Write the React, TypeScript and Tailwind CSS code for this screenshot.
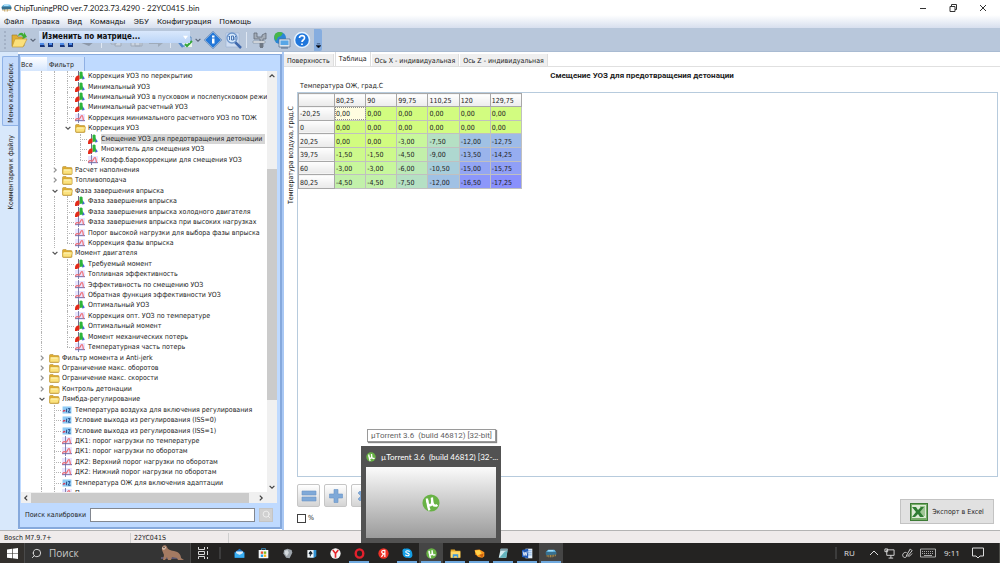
import type { ReactNode } from "react";
import { Search } from "lucide-react";

type IconKind = "surface" | "curve" | "flag" | "folder" | "open";

interface TreeRow {
  // one character per indent cell: | line, t tee, l elbow, > collapsed, v expanded
  guides: string;
  icon: IconKind;
  label: string;
}

const tree: TreeRow[] = [
  { guides: "||t", icon: "surface", label: "Коррекция УОЗ по перекрытию" },
  { guides: "||t", icon: "surface", label: "Минимальный УОЗ" },
  { guides: "||t", icon: "surface", label: "Минимальный УОЗ в пусковом и послепусковом режиме" },
  { guides: "||t", icon: "surface", label: "Минимальный расчетный УОЗ" },
  { guides: "||t", icon: "curve", label: "Коррекция минимального расчетного УОЗ по ТОЖ" },
  { guides: "||v", icon: "open", label: "Коррекция УОЗ" },
  { guides: "|| t", icon: "surface", label: "Смещение УОЗ для предотвращения детонации" },
  { guides: "|| t", icon: "surface", label: "Множитель для смещения УОЗ" },
  { guides: "|| l", icon: "curve", label: "Коэфф.барокоррекции для смещения УОЗ" },
  { guides: "|>", icon: "folder", label: "Расчет наполнения" },
  { guides: "|>", icon: "folder", label: "Топливоподача" },
  { guides: "|v", icon: "open", label: "Фаза завершения впрыска" },
  { guides: "||t", icon: "surface", label: "Фаза завершения впрыска" },
  { guides: "||t", icon: "surface", label: "Фаза завершения впрыска холодного двигателя" },
  { guides: "||t", icon: "curve", label: "Фаза завершения впрыска при высоких нагрузках" },
  { guides: "||t", icon: "curve", label: "Порог высокой нагрузки для выбора фазы впрыска" },
  { guides: "||l", icon: "curve", label: "Коррекция фазы впрыска" },
  { guides: "|v", icon: "open", label: "Момент двигателя" },
  { guides: "| t", icon: "surface", label: "Требуемый момент" },
  { guides: "| t", icon: "curve", label: "Топливная эффективность" },
  { guides: "| t", icon: "curve", label: "Эффективность по смещению УОЗ" },
  { guides: "| t", icon: "curve", label: "Обратная функция эффективности УОЗ" },
  { guides: "| t", icon: "surface", label: "Оптимальный УОЗ" },
  { guides: "| t", icon: "curve", label: "Коррекция опт. УОЗ по температуре" },
  { guides: "| t", icon: "surface", label: "Оптимальный момент" },
  { guides: "| t", icon: "surface", label: "Момент механических потерь" },
  { guides: "| l", icon: "curve", label: "Температурная часть потерь" },
  { guides: ">", icon: "folder", label: "Фильтр момента и Anti-jerk" },
  { guides: ">", icon: "folder", label: "Ограничение макс. оборотов" },
  { guides: ">", icon: "folder", label: "Ограничение макс. скорости" },
  { guides: ">", icon: "folder", label: "Контроль детонации" },
  { guides: "v", icon: "open", label: "Лямбда-регулирование" },
  { guides: "|t", icon: "flag", label: "Температура воздуха для включения регулирования" },
  { guides: "|t", icon: "flag", label: "Условие выхода из регулирования (ISS=0)" },
  { guides: "|t", icon: "flag", label: "Условие выхода из регулирования (ISS=1)" },
  { guides: "|t", icon: "curve", label: "ДК1: порог нагрузки по температуре" },
  { guides: "|t", icon: "curve", label: "ДК1: порог нагрузки по оборотам" },
  { guides: "|t", icon: "curve", label: "ДК2: Верхний порог нагрузки по оборотам" },
  { guides: "|t", icon: "curve", label: "ДК2: Нижний порог нагрузки по оборотам" },
  { guides: "|t", icon: "flag", label: "Температура ОЖ для включения адаптации" },
  { guides: "|t", icon: "curve", label: "П" },
];

const selectedRow = 6;

const columns = ["80,25", "90", "99,75", "110,25", "120", "129,75"];

const rows = [
  { head: "-20,25", cells: ["0,00", "0,00", "0,00", "0,00", "0,00", "0,00"] },
  { head: "0", cells: ["0,00", "0,00", "0,00", "0,00", "0,00", "0,00"] },
  { head: "20,25", cells: ["0,00", "0,00", "-3,00", "-7,50", "-12,00", "-12,75"] },
  { head: "39,75", cells: ["-1,50", "-1,50", "-4,50", "-9,00", "-13,50", "-14,25"] },
  { head: "60", cells: ["-3,00", "-3,00", "-6,00", "-10,50", "-15,00", "-15,75"] },
  { head: "80,25", cells: ["-4,50", "-4,50", "-7,50", "-12,00", "-16,50", "-17,25"] },
];

const heat: Record<string, string> = {
  "0,00": "bg-[#d2fc80]",
  "-1,50": "bg-[#cdf98c]",
  "-3,00": "bg-[#c8f79c]",
  "-4,50": "bg-[#c2f0aa]",
  "-6,00": "bg-[#bce9b8]",
  "-7,50": "bg-[#b5e0c4]",
  "-9,00": "bg-[#aed8d0]",
  "-10,50": "bg-[#a7cddb]",
  "-12,00": "bg-[#a0c1e4]",
  "-12,75": "bg-[#9dbbe8]",
  "-13,50": "bg-[#9ab4ec]",
  "-14,25": "bg-[#96adf0]",
  "-15,00": "bg-[#93a5f4]",
  "-15,75": "bg-[#909ff6]",
  "-16,50": "bg-[#8c97fa]",
  "-17,25": "bg-[#8990fc]",
};

function Chevron({ dir, className = "" }: { dir: "up" | "down" | "left" | "right"; className?: string }) {
  const d = {
    up: "M2 6.5 5 3.5 8 6.5",
    down: "M2 3.5 5 6.5 8 3.5",
    left: "M6.5 2 3.5 5 6.5 8",
    right: "M3.5 2 6.5 5 3.5 8",
  }[dir];
  return (
    <svg viewBox="0 0 10 10" className={`size-[8px] shrink-0 ${className}`} fill="none" stroke="currentColor" strokeWidth="1.5">
      <path d={d} />
    </svg>
  );
}

function Guide({ kind }: { kind: string }) {
  return (
    <span className="relative flex w-[13px] shrink-0 self-stretch items-center justify-center text-[#505050]">
      {(kind === "|" || kind === "t") && <span className="absolute inset-y-0 left-[6px] border-l border-dotted border-[#b4b4b4]" />}
      {kind === "l" && <span className="absolute top-0 h-1/2 left-[6px] border-l border-dotted border-[#b4b4b4]" />}
      {(kind === "t" || kind === "l") && <span className="absolute left-[6px] right-0 top-1/2 border-t border-dotted border-[#b4b4b4]" />}
      {kind === "v" && <Chevron dir="down" />}
      {kind === ">" && <Chevron dir="right" className="text-[#909090]" />}
    </span>
  );
}

function TreeIcon({ kind }: { kind: IconKind }) {
  if (kind === "folder" || kind === "open") {
    return (
      <svg viewBox="0 0 22 20" className="h-[10px] w-[11px]">
        <path d="M1 5q0-2 2-2h5l2 2h8q2 0 2 2v10q0 2-2 2H3q-2 0-2-2z" fill="#e0ac2e" stroke="#a8842c" />
        <path d={kind === "open" ? "M5 8h15l1 1-3 9H2L1 9z" : "M2 8h18v9q0 1-1 1H3q-1 0-1-1z"} fill="#fbe27e" stroke="#c9a03a" />
        <path d="M4 10h13" stroke="#fff6bd" strokeWidth="2" />
      </svg>
    );
  }
  if (kind === "flag") {
    return (
      <svg viewBox="0 0 20 18" className="h-[8px] w-[10px]">
        <path d="M0 1h20v16H0z" fill="#8fcbf5" />
        <path d="M1 13c2-4 3-4 5-1" stroke="#d93c55" strokeWidth="2.5" fill="none" />
        <path d="M9 6v8M12 6h5l-4 8h5" stroke="#173f80" strokeWidth="2" fill="none" />
      </svg>
    );
  }
  if (kind === "curve") {
    return (
      <svg viewBox="0 0 20 20" className="size-[10px]">
        <path d="M0 2h20v16H0z" fill="#e8e5ff" />
        <path d="M7 0v20M0 15h20" stroke="#6a6a9c" strokeWidth="1.6" />
        <path d="M0 15c3-5 5-4 7-3 3 2 4-7 7-7 2 0 2 7 3 10" fill="none" stroke="#ef6a72" strokeWidth="2.4" />
      </svg>
    );
  }
  return (
    <svg viewBox="0 0 20 20" className="size-[10px]">
      <path d="M7 0v20" stroke="#3b3b66" strokeWidth="1.5" />
      <path d="M15 8l4 6v2l-5 1z" fill="#4a60dc" />
      <path d="M9 3c1-3 5-3 6 0l1 12-7 1z" fill="#2cb53a" />
      <path d="M0 18c0-5 2-8 6-9h3v8l-5 3H0z" fill="#e32a19" />
    </svg>
  );
}

function Tree() {
  return (
    <ul className="flex h-[427px] flex-col pl-[14px]">
      {tree.map((row, i) => (
        <li key={i} className="flex min-h-0 flex-1 items-center whitespace-nowrap">
          {row.guides.split("").map((g, n) => (
            <Guide key={n} kind={g} />
          ))}
          <span className="flex w-[14px] shrink-0 pl-px">
            <TreeIcon kind={row.icon} />
          </span>
          <span className={i === selectedRow ? "bg-[#d6d6d6] pr-[3px] leading-[10px]" : "leading-[10px]"}>{row.label}</span>
        </li>
      ))}
    </ul>
  );
}

function CalibrationPanel() {
  return (
    <aside className="mt-[2px] mb-px flex w-[264px] shrink-0 flex-col border-2 border-t border-[#86a9dc] bg-[#bfdaff] p-px pr-[3px]">
      <div role="tablist" className="flex h-[15px] shrink-0 items-end">
        <button role="tab" className="h-[14px] w-[26px] bg-linear-to-b from-white to-[#d5e6fd] pt-px text-left">Все</button>
        <button role="tab" className="h-[14px] w-[38px] border-r border-[#8fb0e4] bg-[#cfe2fc] pt-px pl-[2px] text-left">Фильтр</button>
      </div>
      <div className="flex min-h-0 flex-1 bg-white">
        <div className="min-w-0 flex-1 overflow-hidden">
          <Tree />
        </div>
        <div className="flex w-[10px] shrink-0 flex-col items-center justify-between bg-[#f0f0f0] py-px text-[#404040]">
          <Chevron dir="up" />
          <span className="mt-[89px] h-[231px] w-full bg-[#cbcbcb]" />
          <span className="flex-1" />
          <Chevron dir="down" />
        </div>
      </div>
      <div className="flex h-[11px] shrink-0 items-center bg-[#f0f0f0] pr-[12px] text-[#404040]">
        <Chevron dir="left" className="mx-px" />
        <span className="mr-[8px] h-[10px] flex-1 bg-[#cbcbcb]" />
        <Chevron dir="right" />
      </div>
      <div className="flex h-[23px] shrink-0 items-center pl-[4px] pr-[4px]">
        <label htmlFor="calibration" className="w-[65px]">Поиск калибровки</label>
        <input id="calibration" className="h-[14px] min-w-0 flex-1 border border-[#828790] bg-white px-1" />
        <button aria-label="Найти" className="ml-[4px] flex size-[14px] items-center justify-center border border-[#c4c4c4] bg-[#d0d0d0] text-[#f5f5f5]">
          <Search size={9} />
        </button>
      </div>
    </aside>
  );
}

function MapTable() {
  return (
    <table className="h-[96px] w-[224px] table-fixed border-collapse text-left">
      <thead>
        <tr>
          <th className="w-[36px] border border-[#a8a8a8] bg-linear-to-b from-white to-[#e9e9e9]" />
          {columns.map((c) => (
            <th key={c} className="border border-[#a8a8a8] bg-linear-to-b from-white to-[#ececec] p-0 pt-[2px] pl-px font-normal">{c}</th>
          ))}
        </tr>
      </thead>
      <tbody>
        {rows.map((row, r) => (
          <tr key={row.head}>
            <th className="border border-[#a8a8a8] bg-linear-to-b from-white to-[#e9e9e9] p-0 pt-[2px] pl-px font-normal">{row.head}</th>
            {row.cells.map((cell, c) => (
              <td
                key={c}
                className={`border border-[#c0c0c0] p-0 pt-[2px] pl-px ${r === 0 && c === 0 ? "bg-[#fffde0] outline-1 -outline-offset-1 outline-dotted outline-[#909090]" : heat[cell]}`}
              >
                {cell}
              </td>
            ))}
          </tr>
        ))}
      </tbody>
    </table>
  );
}

function OpButton({ label, d }: { label: string; d: string }) {
  return (
    <button aria-label={label} className="flex size-[23px] items-center justify-center rounded-xs border border-[#c6c6c6] bg-linear-to-b from-white to-[#d4d4d4]">
      <svg viewBox="0 0 16 16" className="size-[16px]">
        <path d={d} fill="#7fa9d8" stroke="#6a94c6" strokeWidth=".6" />
      </svg>
    </button>
  );
}

function ExcelIcon() {
  return (
    <svg viewBox="0 0 18 18" className="size-[18px]">
      <path d="M0 0h18v18H0z" fill="#3c7b35" />
      <path d="M1 1h16v16H1z" fill="#76ad68" />
      <path d="M2 2h14v13H2z" fill="#dcebd5" />
      <path d="M10 3h5v10h-5" fill="#9fc795" />
      <path d="M2 4h4l2 3 3-3h3L10 9l4 5h-4l-2-3-3 3H2l4-5z" fill="#2f7d32" />
    </svg>
  );
}

function Workspace() {
  const tabs = ["Поверхность", "Таблица", "Ось X - индивидуальная", "Ось Z - индивидуальная"];
  return (
    <section className="flex min-w-0 flex-1 flex-col border-l-2 border-[#a9c8f4] bg-white">
      <div role="tablist" className="flex h-[15px] shrink-0 items-end gap-px border-b border-[#e0e0e0]">
        {tabs.map((t, i) => (
          <button
            key={t}
            role="tab"
            className={
              i === 1
                ? "h-[14px] border-x border-[#dedede] bg-white px-[3px] pb-px"
                : "h-[12px] border-r border-[#dedede] bg-[#efefef] px-[3px] pt-px"
            }
          >
            {t}
          </button>
        ))}
      </div>
      <h1 className="mt-[4px] text-center font-['Roboto',sans-serif] text-[8px] font-bold leading-[10px]">
        Смещение УОЗ для предотвращения детонации
      </h1>
      <div className="pl-[16px] leading-[11px]">Температура ОЖ, град.C</div>
      <div className="flex min-h-0 flex-1">
        <div className="w-[13px] shrink-0 pt-[14px] pl-[2px]">
          <span className="block rotate-180 leading-[10px] [writing-mode:vertical-rl]">Температура воздуха, град.C</span>
        </div>
        <div className="mr-[2px] min-w-0 flex-1 border border-[#b7cbdd]">
          <MapTable />
        </div>
      </div>
      <div className="flex h-[53px] shrink-0 items-start justify-between pl-[13px] pr-[6px]">
        <div className="pt-[7px]">
          <div className="flex gap-[4px]">
            <OpButton label="Присвоить" d="M1 3h14v4H1zM1 9h14v4H1z" />
            <OpButton label="Прибавить" d="M6 1.500h4v4.500h4.500v4H10v4.500H6V10H1.500V6H6z" />
            <OpButton label="Умножить" d="M3 5l2-2 3 3 3-3 2 2-3 3 3 3-2 2-3-3-3 3-2-2 3-3z" />
          </div>
          <label className="mt-[6px] flex items-center gap-[2px]">
            <input type="checkbox" className="size-[9px] appearance-none border border-[#404040] bg-white" />%
          </label>
        </div>
        <button className="mt-[22px] flex h-[25px] w-[94px] items-center justify-center gap-[4px] border border-[#c3c3c3] bg-[#e1e1e1]">
          <ExcelIcon />
          Экспорт в Excel
        </button>
      </div>
    </section>
  );
}

function ChipIcon({ className }: { className: string }) {
  return (
    <svg viewBox="0 0 22 16" className={className}>
      <path d="M4 8v6M7 9v6M10 9v6M13 9v6M16 9v5M19 8v5" stroke="#c09a4a" strokeWidth="1.5" />
      <path d="M1 6 5 2h13l3 4v4L2 11z" fill="#37708f" />
      <path d="M2 5 6 1h11l3 4z" fill="#6ac0ef" />
      <path d="M6 3h9" stroke="#c9efff" strokeWidth="1.5" />
    </svg>
  );
}

function ToolButton({ label, children }: { label: string; children?: ReactNode }) {
  return (
    <button aria-label={label} className="flex w-[20px] shrink-0 items-center justify-center">
      <svg viewBox="0 0 18 18" className="size-[18px]">
        {children}
      </svg>
    </button>
  );
}

function Binoculars() {
  return (
    <>
      <path d="M2 8h4v5l1 3H2zM10 8h5v8h-5z" fill="#16357c" />
      <path d="M6 8h4v3H6z" fill="#6b86b8" />
      <path d="M2 13h4M11 13h3" stroke="#4f8be6" strokeWidth="2" />
    </>
  );
}

function Toolbar() {
  return (
    <div className="relative flex h-[24px] shrink-0 items-center border-b border-[#a9bbd2] bg-[#b8c7db]">
      <span className="ml-[4px] h-[18px] border-l-2 border-dotted border-[#a3b1c6]" />
      <span className="w-[3px]" />
      <ToolButton label="Открыть">
        <path d="M2 4h5l1 2h6v9H2z" fill="#dfae34" stroke="#9b7a25" strokeWidth=".6" />
        <path d="M5 8h12l-4 8H2z" fill="#fbe07a" stroke="#b9912f" strokeWidth=".6" />
        <path d="M8 5c1-4 5-4 6-1V1l3 5-5 2 1-2c-1-2-3-2-5-1z" fill="#3dac33" />
      </ToolButton>
      <Chevron dir="down" className="text-[#5a6578]" />
      <ToolButton label="Поиск">
        <Binoculars />
      </ToolButton>
      <ToolButton label="Искать далее">
        <Binoculars />
      </ToolButton>
      <ToolButton label="Печать">
        <path d="M1 11 8 6l9 4-6 5z" fill="#8d98a8" />
        <path d="M5 10l4-2 5 2-4 2z" fill="#e4e8ee" />
      </ToolButton>
      <span className="mx-[4px] h-[16px] w-px bg-[#dfe7f2]" />
      <ToolButton label="Копировать">
        <path d="M4 6h5v7H4zM8 8h6v7H8z" fill="#cbd4e0" stroke="#9fabba" />
      </ToolButton>
      <ToolButton label="Вставить">
        <path d="M4 4h9v11H4zM8 8h7v7H8z" fill="#cbd4e0" stroke="#9fabba" />
      </ToolButton>
      <ToolButton label="Отменить">
        <path d="M2 10h9V7l5 5-5 4v-3H2z" fill="#9fabba" />
      </ToolButton>
      <span className="ml-[4px] h-[16px] w-px bg-[#dfe7f2]" />
      <span className="w-[3px]" />
      <ToolButton label="Проверить">
        <path d="M3 6h13v9H6z" fill="#d6e8fb" stroke="#5a8dc5" />
        <path d="M4 11l4 5" stroke="#4f86cc" strokeWidth="2.500" />
        <path d="M10 10h7v6h-7z" fill="#e8f6e8" />
        <path d="M10 13l2 2 5-5" fill="none" stroke="#35a53b" strokeWidth="2" />
      </ToolButton>
      <Chevron dir="down" className="text-[#5a6578]" />
      <span className="w-px" />
      <ToolButton label="Сведения">
        <path d="M9 1l8 8-8 8-8-8z" fill="#2478d8" stroke="#c5e4ff" strokeWidth=".8" />
        <path d="M9 .5 17.500 9 9 17.500.5 9z" fill="none" stroke="#1d559c" strokeWidth=".7" />
        <path d="M8 7.500h2.500v5H8zM8 4.500h2.500v2H8z" fill="#fff" />
      </ToolButton>
      <ToolButton label="Сравнить">
        <path d="M2 2h13v14H2z" fill="#cfddf1" stroke="#9db4d6" strokeWidth=".7" />
        <path d="M11 11l6 6" stroke="#3f68ac" strokeWidth="2.500" />
        <circle cx="8" cy="7" r="5" fill="#d5e8fb" stroke="#6d95cb" strokeWidth="1.300" />
        <path d="M4.500 6l1-1v4M7.500 5h2v4h-2zM12 5l-1 1v3" stroke="#3a69ac" strokeWidth=".9" fill="none" />
      </ToolButton>
      <span className="mx-[3px] h-[16px] w-px bg-[#dfe7f2]" />
      <ToolButton label="Настройки">
        <path d="M3 2h3v4h5V4l4-2v6h-3v8H9V8H3z" fill="#a4adb8" stroke="#59626e" strokeWidth=".7" />
        <path d="M2 10h12v2H2z" fill="#eef1f5" stroke="#6b7480" strokeWidth=".5" />
        <path d="M9 12h3v5H9z" fill="#6f7884" />
      </ToolButton>
      <span className="w-[2px]" />
      <ToolButton label="Интернет">
        <circle cx="7" cy="7" r="6" fill="#2b86d6" />
        <path d="M2 3c3-3 6-2 8-1L8 5 5 6 3 10C1 8 1 5 2 3z" fill="#48b648" />
        <path d="M6 8h11v8H6z" fill="#dfe6ee" stroke="#526c8b" strokeWidth=".7" />
        <path d="M7.500 9.500h8V14h-8z" fill="#58a6e6" />
        <path d="M8 17h7" stroke="#526c8b" />
      </ToolButton>
      <ToolButton label="Справка">
        <circle cx="9" cy="9" r="7.500" fill="#2077dc" stroke="#e4f2ff" strokeWidth="1.500" />
        <path d="M6.500 7C6.500 3.500 12 4 11.500 7c0 2-2.500 2-2.500 4M9 12.500V14" fill="none" stroke="#fff" strokeWidth="1.700" />
      </ToolButton>
      <button aria-label="Ещё" className="ml-[2px] flex h-[22px] w-[8px] items-end justify-center rounded-r-xs bg-[#86addf] pb-[3px]">
        <svg viewBox="0 0 6 6" className="size-[5px]"><path d="M1 1h4M0 3h6L3 6z" stroke="#1c2c48" strokeWidth=".8" /></svg>
      </button>
      {/* floating macro bar over the disabled icons */}
      <div className="absolute left-[39px] top-[3px] flex h-[12px] w-[151px] items-center justify-between bg-linear-to-b from-[#d9e8fc] to-[#bcd5f7] pr-[2px] pl-[3px]">
        <button className="text-[8px] font-bold leading-[12px] text-[#111]">Изменить по матрице...</button>
        <svg viewBox="0 0 6 6" className="size-[5px]"><path d="M0 1h6L3 5z" fill="#fff" /></svg>
      </div>
    </div>
  );
}

function UTorrentIcon({ className }: { className: string }) {
  return (
    <svg viewBox="0 0 20 20" className={className}>
      <circle cx="10" cy="10" r="9.500" fill="#68b245" />
      <path d="M5.500 5c0 5 1 7.500 3.500 7.500S11.500 9 11 4M11 4c.3 6 1 9 3.500 9 1 0 2-.5 2.500-1M6 7c.5 5 1 9 2.500 11" fill="none" stroke="#fff" strokeWidth="2.600" />
    </svg>
  );
}

function AppGlyph({ name }: { name: string }) {
  switch (name) {
    case "Почта":
      return <><path d="M1 6 8 1l7 5v8H1z" fill="#1b74c5" /><path d="M3 5h10v5H3z" fill="#d9ecfa" /><path d="M1 6l7 4 7-4v8H1z" fill="#38aef2" /></>;
    case "Магазин":
      return <><path d="M5 4V1h6v3" stroke="#47b5f0" fill="none" /><path d="M1 3h14v11q0 1-1 1H2q-1 0-1-1z" fill="#f4f8fb" /><path d="M4 5h3.500v3.500H4z" fill="#e9512d" /><path d="M8.500 5H12v3.500H8.500z" fill="#7db91f" /><path d="M4 9.500h3.500V13H4z" fill="#20a2e8" /><path d="M8.500 9.500H12V13H8.500z" fill="#f9b715" /></>;
    case "Танки":
      return <><path d="M8 1l6 2 1 4-4 8-5-1-4-6 1-5z" fill="#9da4ab" /><path d="M4 4l4-1 2 4-3 5-3-4z" fill="#d5dade" /></>;
    case "Пасьянс":
      return <><path d="M5 3h10v9l-3 2H6z" fill="#2f91d2" /><path d="M2 3h9v11H2z" fill="#f3f7fa" /><path d="M6.500 4c3 3 4 4 2 5.500L7 9v3H5.500V9C3 9 3.500 7 6.500 4z" fill="#182735" /></>;
    case "Яндекс.Браузер":
      return <><circle cx="8" cy="8" r="7.500" fill="#f5f5f5" /><path d="M4 3l4 5 4-5M8 8v6" fill="none" stroke="#e5262c" strokeWidth="2.400" /></>;
    case "Opera":
      return <ellipse cx="8" cy="8" rx="5.500" ry="6" fill="none" stroke="#e3202c" strokeWidth="3.500" />;
    case "Яндекс":
      return <><circle cx="8" cy="8" r="7.500" fill="#ef3127" /><path d="M10 13V3.500C6 3 5 5 5.500 6.500S8 8.500 10 8.500M8 8.500 5 13" fill="none" stroke="#fff" strokeWidth="1.700" /></>;
    case "Skype":
      return <><path d="M5 1C1 0 0 4 1 6c-1 6 4 9 8 8 4 2 7-2 6-5 0-6-5-9-10-8z" fill="#159fe5" /><path d="M11 5.500C10 3.500 5 3.500 5.500 6c.5 2 5 1 5 3.500 0 2.500-5 2-5.500 0" fill="none" stroke="#fff" strokeWidth="1.600" /></>;
    case "Проводник":
      return <><path d="M1 2h6l1 2h7v10H1z" fill="#e7a927" /><path d="M1 5h14v9H1z" fill="#ffd968" /><path d="M4 9h8v5H10v-2H6v2H4z" fill="#3e98dc" /></>;
    case "Карты":
      return <><path d="M1 3l7-1 7 4v6l-3 2-6-1-4-4z" fill="#f7941d" /><path d="M1 4l7-1 3 5-6 3z" fill="#ffd24a" /><path d="M8 10l6-2-2 6z" fill="#c85f10" /></>;
    case "Блокнот":
      return <><path d="M4 1h10l-2 13H1z" fill="#cfe9ee" /><path d="M4 1h10v3H3z" fill="#7a9aa5" /><path d="M10 5l4-1-2 10H2z" fill="#63b3bd" /></>;
    case "Word":
      return <><path d="M5 1h10v14H5z" fill="#e2edfa" /><path d="M7 4h7M7 7h7M7 10h7" stroke="#5b95da" /><path d="M0 3l9-2v14l-9-2z" fill="#2058b5" /><path d="M1.500 5l1.500 6 1.500-5 1.500 5 1.500-6" fill="none" stroke="#fff" strokeWidth="1.200" /></>;
    default:
      return null;
  }
}

const apps = [
  { name: "Почта" },
  { name: "Магазин" },
  { name: "Танки" },
  { name: "Пасьянс" },
  { name: "Яндекс.Браузер" },
  { name: "Opera", running: true },
  { name: "Яндекс" },
  { name: "Skype", running: true },
  { name: "µTorrent", running: true, active: true },
  { name: "Проводник", running: true },
  { name: "Карты", running: true },
  { name: "Блокнот", running: true },
  { name: "Word", running: true },
  { name: "ChipTuningPRO", running: true, active: true },
];

function Taskbar() {
  return (
    <footer className="relative flex h-[20px] shrink-0 items-stretch bg-[#242322] font-['Open_Sans',sans-serif] text-[#e2e2e2]">
      <button aria-label="Пуск" className="flex w-[24px] items-center justify-center bg-[#33302d]">
        <svg viewBox="0 0 12 12" className="size-[11px]" fill="#fff">
          <path d="M0 1.500 5.500.8v4.900H0zM6.200.7 12 0v5.700H6.200zM0 6.300h5.500v4.900L0 10.500zM6.200 6.300H12V12l-5.800-.7z" />
        </svg>
      </button>
      <label className="flex w-[167px] items-center border-x border-[#4a4a4a] bg-[#343434] pl-[6px]">
        <Search size={11} strokeWidth={2} className="-scale-x-100" />
        <input aria-label="Поиск" placeholder="Поиск" className="ml-[7px] w-[110px] bg-transparent text-[10px] leading-[14px] placeholder:text-[#c9c9c9]" />
        <svg viewBox="0 0 26 18" className="h-[18px] w-[26px]">
          <path d="M2 14h20" stroke="#5b5670" strokeWidth="2" />
          <path d="M3 6C2 1 7 0 8 3c1 3 3 3 7 4 5 1 7 4 7 7l3 2h-6l-1-2-5-1-1 3H9l-1-3-2 3H4l1-5z" fill="#a47a62" />
          <path d="M3 5c0-3 4-3 4-1l-2 2z" fill="#d8bfae" />
          <circle cx="5" cy="3.500" r=".7" fill="#29201c" />
        </svg>
      </label>
      <button aria-label="Представление задач" className="flex w-[24px] items-center justify-center">
        <svg viewBox="0 0 12 12" className="size-[12px]" fill="none" stroke="#d8d8d8">
          <path d="M1.500 0v2.500h6V0M1.500 12V9.500h6V12M1.500 4.500h6v3h-6zM10.500 0v2M10.500 4v4M10.500 10v2" />
        </svg>
      </button>
      <span className="mx-[4px] h-[12px] w-[2px] self-center bg-[#3c3c3c]" />
      <span className="w-[2px]" />
      {apps.map((a) => (
        <button
          key={a.name}
          aria-label={a.name}
          className={`flex w-[24px] items-center justify-center px-[2px] ${a.active ? "bg-[#454545]" : ""}`}
        >
          <span className={`flex h-full w-full items-center justify-center border-y-2 border-t-transparent ${a.running ? "border-b-[#6fa9de]" : "border-b-transparent"}`}>
            {a.name === "µTorrent" ? (
              <UTorrentIcon className="size-[11px]" />
            ) : a.name === "ChipTuningPRO" ? (
              <ChipIcon className="h-[9px] w-[12px]" />
            ) : (
              <svg viewBox="0 0 16 16" className="size-[11px]"><AppGlyph name={a.name} /></svg>
            )}
          </span>
        </button>
      ))}
      <span className="flex-1" />
      <div className="flex items-center">
        <span className="mr-[7px] h-[12px] w-[2px] bg-[#3c3c3c]" />
        <span className="w-[25px] text-[8px]">RU</span>
        <svg viewBox="0 0 10 10" className="mr-[5px] size-[10px]" fill="none" stroke="#ddd">
          <path d="M1 7l4-4 4 4" />
        </svg>
        <svg viewBox="0 0 12 12" className="mr-[7px] size-[11px]" fill="none" stroke="#ddd">
          <path d="M3 2h8v6H3zM5 11h5M7.500 8v3M1 1h3v3H1z" />
        </svg>
        <svg viewBox="0 0 12 12" className="mr-[7px] size-[11px]" fill="none" stroke="#ddd">
          <path d="M5 8 9 1l2 2-5 6zM5 5C2 4 0 7 1 9s4 2 4-1M7 9c2 0 3-2 4-3" />
        </svg>
        <svg viewBox="0 0 16 10" className="mr-[8px] h-[10px] w-[16px]" fill="none" stroke="#ccc" strokeWidth=".8">
          <path d="M.5 1h15v8H.5z" />
          <path d="M2 3.500h12M2 5.500h12" strokeDasharray="1 1" />
          <path d="M4 7.500h8" />
        </svg>
        <time className="w-[28px] text-[8px]">9:11</time>
        <svg viewBox="0 0 12 12" className="mr-[15px] size-[12px]" fill="none" stroke="#ddd">
          <path d="M.5 1h11v8H8L6 11 4 9H.5z" />
        </svg>
        <span className="h-[20px] w-px bg-[#4a4a46]" />
      </div>

      {/* window preview and its tooltip */}
      <div className="absolute bottom-full left-[361px] flex h-[97px] w-[140px] flex-col bg-[#525252] px-[5px] pb-[5px]">
        <div className="flex h-[21px] items-center gap-[5px] text-white">
          <UTorrentIcon className="size-[10px] shrink-0" />
          <span className="whitespace-pre font-['Lato',sans-serif] text-[8px]">µTorrent 3.6  (build 46812) [32-...</span>
        </div>
        <div className="flex flex-1 items-center justify-center bg-linear-to-b from-[#fbfbfb] to-[#9b9b9b]">
          <UTorrentIcon className="size-[18px]" />
        </div>
      </div>
      <div role="tooltip" className="absolute bottom-[121px] left-[367px] flex h-[13px] items-center whitespace-pre border border-[#9a9a9a] bg-white px-[3px] font-['Roboto',sans-serif] text-[8px] text-[#5f5f5f] shadow-[1px_1px_1px_#888]">
        µTorrent 3.6  (build 46812) [32-bit]
      </div>
    </footer>
  );
}

export default function App() {
  const menu = ["Файл", "Правка", "Вид", "Команды", "ЭБУ", "Конфигурация", "Помощь"];
  return (
    <div className="flex h-screen flex-col overflow-hidden bg-white font-['DejaVu_Sans_Condensed','DejaVu_Sans',sans-serif] text-[7px] leading-[10px] text-[#222]">
      <header className="flex h-[15px] shrink-0 items-center bg-white pl-px font-['Lato',sans-serif] text-[8px]">
        <ChipIcon className="h-[8px] w-[11px]" />
        <span className="ml-[2px] flex-1">ChipTuningPRO ver.7.2023.73.4290 - 22YC041S .bin</span>
        <div className="flex items-center gap-[20px] pr-[12px]">
          <button aria-label="Свернуть">
            <svg viewBox="0 0 10 10" className="size-[10px]" stroke="#333"><path d="M2 5.500h6" /></svg>
          </button>
          <button aria-label="Развернуть">
            <svg viewBox="0 0 10 10" className="size-[10px]" fill="none" stroke="#333"><path d="M2 3.500h5v5H2zM3.500 3.500v-2h5v5H7" /></svg>
          </button>
          <button aria-label="Закрыть">
            <svg viewBox="0 0 10 10" className="size-[10px]" stroke="#333"><path d="M2 2l6 6M8 2 2 8" /></svg>
          </button>
        </div>
      </header>

      <nav className="flex h-[13px] shrink-0 items-center gap-[8px] bg-linear-to-b from-white to-[#d7dfee] pl-[4px] font-['Roboto',sans-serif] text-[8px]">
        {menu.map((m) => (
          <button key={m}>{m}</button>
        ))}
      </nav>

      <Toolbar />

      <main className="flex min-h-0 flex-1">
        <div role="tablist" className="flex w-[18px] shrink-0 flex-col bg-[#d8e8fb] pl-[2px] pt-[4px]">
          <button role="tab" className="flex h-[70px] items-center justify-center rounded-l-xs border border-r-0 border-[#8fb2e6] bg-[#c3dafb] pt-[4px] pl-px">
            <span className="rotate-180 [writing-mode:vertical-rl]">Меню калибровок</span>
          </button>
          <button role="tab" className="flex h-[92px] items-center justify-center pl-px">
            <span className="rotate-180 [writing-mode:vertical-rl]">Комментарии к файлу</span>
          </button>
        </div>
        <CalibrationPanel />
        <Workspace />
      </main>

      <div className="flex h-[13px] shrink-0 items-center border-t border-[#b4b4b4] bg-[#efebeb] pt-px pl-[4px]">
        <span className="w-[127px] border-r border-[#cfcfcf]">Bosch M7.9.7+</span>
        <span className="w-[98px] border-r border-[#cfcfcf] pl-[3px]">22YC041S</span>
      </div>

      <Taskbar />
    </div>
  );
}
